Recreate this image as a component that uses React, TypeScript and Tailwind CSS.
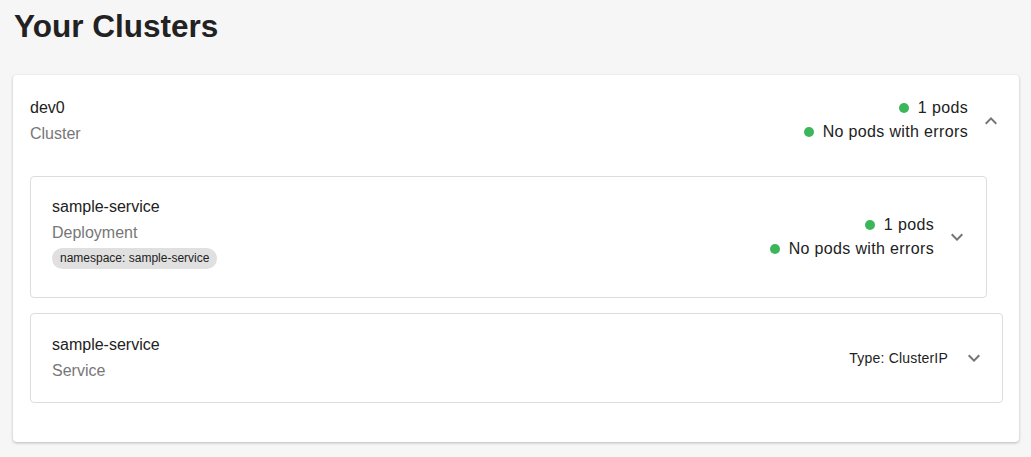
import React from "react";

const Chevron = ({ up = false }: { up?: boolean }) => (
  <svg width="24" height="24" viewBox="0 0 24 24" className={up ? "rotate-180" : ""} fill="#757575">
    <path d="M16.59 8.59 12 13.17 7.41 8.59 6 10l6 6 6-6z" />
  </svg>
);

const Status = ({ text }: { text: string }) => (
  <div className="flex items-center justify-end h-[24px] leading-[24px]">
    <span className="w-[10px] h-[10px] rounded-full bg-[#3cb65a] mr-[9px]" />
    <span className="text-[16px] tracking-[0.35px] text-[#222]">{text}</span>
  </div>
);

export default function App() {
  return (
    <div className="min-h-[457px] bg-[#f6f6f6] text-[#222]" style={{ fontFamily: '"Liberation Sans", Arial, sans-serif' }}>
      <h1 className="pt-[6px] pl-[14px] text-[31.5px] leading-[40px] font-bold text-[#222]">Your Clusters</h1>
      <div className="mt-[29px] ml-[13px] mr-[12px] bg-white rounded-[4px] shadow-[0_1px_3px_rgba(0,0,0,0.25)] pl-[17px] pr-[16px] pt-[20px] pb-[39px]">
        <div className="flex items-start">
          <div className="flex-1">
            <div className="text-[16px] leading-[26px] text-[#222]">dev0</div>
            <div className="text-[16px] leading-[26px] text-[#777]">Cluster</div>
          </div>
          <div className="pt-[1px]">
            <Status text="1 pods" />
            <Status text="No pods with errors" />
          </div>
          <div className="ml-[11px] mt-[14px]">
            <Chevron up />
          </div>
        </div>
        <div className="mt-[29px] mr-[16px] border border-[#ddd] rounded-[4px] pl-[21px] pr-[17px] pt-[17px] pb-[28px] flex items-center">
          <div className="flex-1">
            <div className="text-[16px] leading-[26px] text-[#222]">sample-service</div>
            <div className="text-[16px] leading-[25px] text-[#777]">Deployment</div>
            <div className="mt-[2px] inline-flex items-center h-[21px] px-[8px] rounded-full bg-[#e0e0e0] text-[12px] text-[#222]">
              namespace: sample-service
            </div>
          </div>
          <div className="mt-[10px]">
            <Status text="1 pods" />
            <Status text="No pods with errors" />
          </div>
          <div className="ml-[11px] mt-[10px]">
            <Chevron />
          </div>
        </div>
        <div className="mt-[15px] border border-[#ddd] rounded-[4px] pl-[21px] pr-[16px] pt-[18px] pb-[18px] flex items-center">
          <div className="flex-1">
            <div className="text-[16px] leading-[26px] text-[#222]">sample-service</div>
            <div className="text-[16px] leading-[26px] text-[#777]">Service</div>
          </div>
          <div className="text-[14px] tracking-[0.2px] text-[#222]">Type: ClusterIP</div>
          <div className="ml-[14px]">
            <Chevron />
          </div>
        </div>
      </div>
    </div>
  );
}
